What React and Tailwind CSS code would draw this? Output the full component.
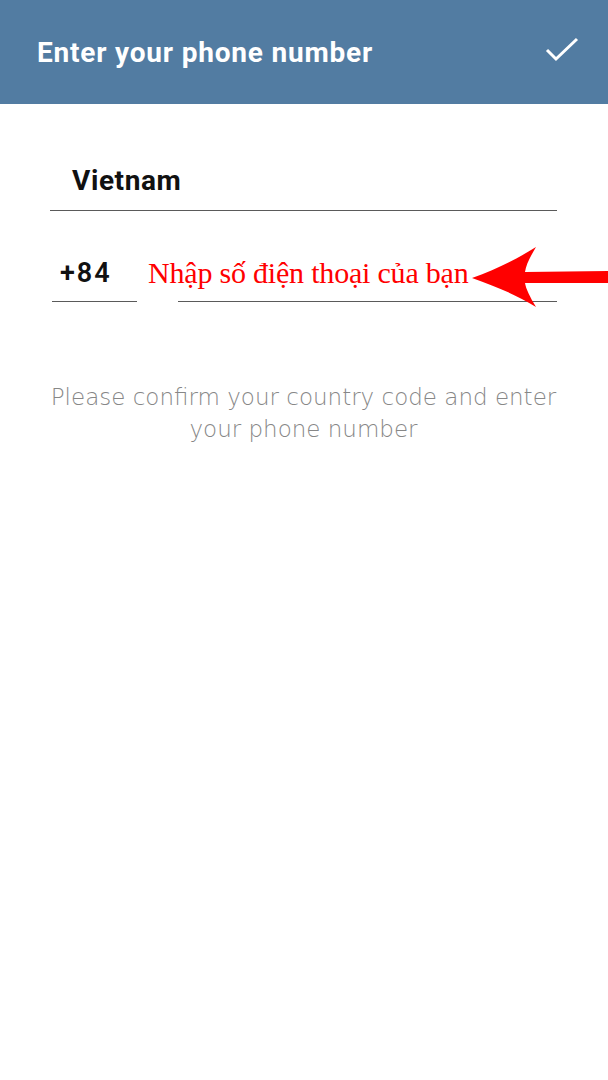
export default function App() {
  return (
    <div className="w-[608px] h-[1080px] bg-white flex flex-col">
      <div className="h-[104px] bg-[#527ca2] flex items-center justify-between pl-[37px] pr-[28px] shrink-0">
        <div className="text-white text-[28px] font-bold tracking-[0.8px] font-['Roboto',sans-serif] pt-[2px]">
          Enter your phone number
        </div>
        <svg width="36" height="28" viewBox="0 0 36 28" className="mt-[-2px]">
          <path d="M3 13 L12 22 L33 2" fill="none" stroke="white" strokeWidth="3" />
        </svg>
      </div>
      <div className="flex flex-col px-[50px] pr-[51px] font-['Roboto',sans-serif]">
        <div className="pt-[56px] pl-[22px] h-[107px] border-b border-[#5a5a5a] text-[28px] font-bold tracking-[0.6px] text-[#111]">
          Vietnam
        </div>
        <div className="relative flex items-end h-[91px]">
          <div className="w-[85px] ml-[2px] h-full border-b border-[#5a5a5a] pl-[8px] pt-[42px] text-[27px] font-semibold tracking-[2px] text-[#111]">
            +84
          </div>
          <div className="flex-1 ml-[41px] h-full border-b border-[#5a5a5a]"></div>
          <div className="absolute left-[98px] top-[47px] text-[30px] tracking-[-0.2px] text-[#ff0000] font-['Liberation_Serif',serif] leading-none">
            Nhập số điện thoại của bạn
          </div>
          <svg className="absolute left-[422px] top-[36px]" width="137" height="60" viewBox="0 0 137 60">
            <path d="M0 31 C 25 22, 45 12, 64 0 C 58 10, 54 18, 53 25 L 137 24 L 137 36 L 53 36 C 54 42, 58 50, 64 60 C 45 48, 25 40, 0 31 Z" fill="#ff0000" />
          </svg>
        </div>
        <div className="mt-[79px] text-center text-[23px] leading-[32px] text-[#878787] font-['DejaVu_Sans',sans-serif] font-extralight">
          Please confirm your country code and enter
          <br />
          your phone number
        </div>
      </div>
    </div>
  );
}
